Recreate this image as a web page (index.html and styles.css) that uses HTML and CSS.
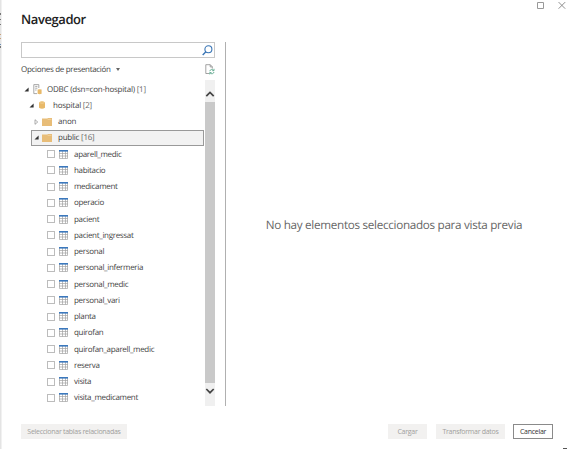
FILE: index.html
```html
<!DOCTYPE html>
<html lang="es">
<head>
<meta charset="utf-8">
<title>Navegador</title>
<link rel="stylesheet" href="styles.css">
</head>
<body>
<svg class="defs" aria-hidden="true">
  <symbol id="table" viewBox="0 0 9 9"><path fill="#fff" d="M0 0h9v9H0z"/><path d="M.5 0v8.500h8V0M3.500 1v7.500M6.500 1v7.500M0 3.500h9M0 6h9" fill="none" stroke="#a2a2a2" stroke-width=".7"/><path fill="#3b78bd" d="M0 0h9v1.600H0z"/></symbol>
  <symbol id="folder" viewBox="0 0 10 8"><path fill="#e8bd78" d="M0 .5h5.400L6 0H10v8H0z"/><path d="M5.600 1.400H9.400" stroke="#f7e3bf" stroke-width=".5"/></symbol>
  <symbol id="open" viewBox="0 0 5 5"><path fill="#333" d="M4.600.5v3.900H.5z"/></symbol>
  <symbol id="closed" viewBox="0 0 5 6"><path fill="#fff" stroke="#8a8a8a" stroke-width=".7" d="M1 .7 3.700 3 1 5.300z"/></symbol>
</svg>
<svg class="behind" width="2" height="449" viewBox="0 0 2 449"><path fill="#e4e4e4" d="M0 0h1.500v449H0z"/><path fill="#777" d="M0 13h1v2H0zM0 19h1v1H0zM0 24h1v1H0zM0 46h1v2H0z"/><path fill="#c9a27c" d="M0 34h1v1H0zM0 38h1v1H0z"/><path fill="#6d8fb5" d="M0 44h1v1H0z"/></svg>
<svg class="corner" width="4" height="1" viewBox="0 0 4 1"><path fill="#555" d="M0 0h4v1H0z"/></svg>
<div class="window">
  <div class="titlebar">
    <svg width="8" height="8" viewBox="0 0 8 8"><path d="M.5 1.500h6v6h-6z" fill="none" stroke="#999"/></svg>
    <svg width="8" height="8" viewBox="0 0 8 8"><path d="M.6 1.100l6.600 6.600M7.200 1.100.6 7.700" stroke="#888" stroke-width=".95"/></svg>
  </div>
  <h1>Navegador</h1>
  <main>
    <section class="sidebar">
      <div class="search">
        <svg width="11" height="11" viewBox="0 0 11 11"><circle cx="6.400" cy="4.300" r="3.500" fill="none" stroke="#3975b5" stroke-width="1.100"/><path d="M3.900 6.800.7 10" stroke="#3975b5" stroke-width="1.400"/></svg>
      </div>
      <div class="options">
        <span class="label">Opciones de presentación</span><i class="caret"></i>
        <svg class="refresh" width="10" height="11" viewBox="0 0 10 11"><path d="M4 9.500H.8V.7h4.500l2 2v2M5.200.8v2.100h2" fill="none" stroke="#8c8c8c" stroke-width=".8"/><path d="M4.700 7.200a2.200 2.200 0 0 1 3.900-.8M9 4.800v1.900H7.200M9 8a2.200 2.200 0 0 1-3.900.9M4.700 10.400V8.600h1.800" fill="none" stroke="#5ea88d" stroke-width=".9"/></svg>
      </div>
      <div class="browser">
        <div class="tree">
          <div class="row l0"><svg class="arrow"><use href="#open"/></svg><svg class="server" viewBox="0 0 9 11"><path d="M5.800 4V.6H.8v9H4M2.200 2.400h2.200M2.200 4.200h2.200M2.200 6h1.300" fill="none" stroke="#929292" stroke-width=".8"/><path fill="#e8b969" d="M4.600 5.600q2-.9 4 0v4.200q-2 .9-4 0z"/></svg><span>ODBC (dsn=con-hospital) <em>[1]</em></span></div>
          <div class="row l1"><svg class="arrow"><use href="#open"/></svg><svg class="database" viewBox="0 0 6 8"><path fill="#e8b969" d="M0 1.200Q3-.8 6 1.200v5.600q-3 2-6 0z"/><path d="M.2 1.600q2.800 1.300 5.600 0" fill="none" stroke="#f6deb2" stroke-width=".6"/></svg><span>hospital <em>[2]</em></span></div>
          <div class="row l2"><svg class="arrow closed"><use href="#closed"/></svg><svg class="folder"><use href="#folder"/></svg><span>anon</span></div>
          <div class="row l2 selected"><svg class="arrow"><use href="#open"/></svg><svg class="folder"><use href="#folder"/></svg><span>public <em>[16]</em></span></div>
          <div class="row leaf"><i class="check"></i><svg class="table"><use href="#table"/></svg><span>aparell_medic</span></div>
          <div class="row leaf"><i class="check"></i><svg class="table"><use href="#table"/></svg><span>habitacio</span></div>
          <div class="row leaf"><i class="check"></i><svg class="table"><use href="#table"/></svg><span>medicament</span></div>
          <div class="row leaf"><i class="check"></i><svg class="table"><use href="#table"/></svg><span>operacio</span></div>
          <div class="row leaf"><i class="check"></i><svg class="table"><use href="#table"/></svg><span>pacient</span></div>
          <div class="row leaf"><i class="check"></i><svg class="table"><use href="#table"/></svg><span>pacient_ingressat</span></div>
          <div class="row leaf"><i class="check"></i><svg class="table"><use href="#table"/></svg><span>personal</span></div>
          <div class="row leaf"><i class="check"></i><svg class="table"><use href="#table"/></svg><span>personal_infermeria</span></div>
          <div class="row leaf"><i class="check"></i><svg class="table"><use href="#table"/></svg><span>personal_medic</span></div>
          <div class="row leaf"><i class="check"></i><svg class="table"><use href="#table"/></svg><span>personal_vari</span></div>
          <div class="row leaf"><i class="check"></i><svg class="table"><use href="#table"/></svg><span>planta</span></div>
          <div class="row leaf"><i class="check"></i><svg class="table"><use href="#table"/></svg><span>quirofan</span></div>
          <div class="row leaf"><i class="check"></i><svg class="table"><use href="#table"/></svg><span>quirofan_aparell_medic</span></div>
          <div class="row leaf"><i class="check"></i><svg class="table"><use href="#table"/></svg><span>reserva</span></div>
          <div class="row leaf"><i class="check"></i><svg class="table"><use href="#table"/></svg><span>visita</span></div>
          <div class="row leaf"><i class="check"></i><svg class="table"><use href="#table"/></svg><span>visita_medicament</span></div>
        </div>
        <div class="scrollbar">
          <svg class="up" width="10" height="22" viewBox="0 0 10 22"><path d="M1.300 16.200 5 12.500l3.700 3.700" fill="none" stroke="#444" stroke-width="1.700"/></svg>
          <div class="thumb"></div>
          <svg class="down" width="10" height="23" viewBox="0 0 10 23"><path d="M1.300 6 5 9.700 8.700 6" fill="none" stroke="#444" stroke-width="1.700"/></svg>
        </div>
      </div>
    </section>
    <section class="preview"><p>No hay elementos seleccionados para vista previa</p></section>
  </main>
  <footer>
    <button class="related" disabled>Seleccionar tablas relacionadas</button>
    <button class="load" disabled>Cargar</button>
    <button class="transform" disabled>Transformar datos</button>
    <button class="cancel">Cancelar</button>
  </footer>
</div>
</body>
</html>
```
FILE: styles.css
```css
* { box-sizing: border-box; }
body { margin: 0; background: #fff; font: 8px/1 "Open Sans", "Noto Sans", sans-serif; letter-spacing: -.32px; color: #444; text-rendering: geometricPrecision; }
svg { display: block; flex: none; }
.defs { position: absolute; width: 0; height: 0; }
.behind { position: absolute; left: 0; top: 0; }
.corner { position: absolute; right: 0; bottom: 0; }
.window { width: 567px; height: 449px; display: flex; flex-direction: column; overflow: hidden; padding-left: 1px; }
.titlebar { height: 10px; padding: 1px 1px 0 0; display: flex; justify-content: flex-end; gap: 13px; }
h1 { height: 32px; margin: 0; padding-left: 20px; font-size: 13px; line-height: 18px; font-weight: 600; color: #222; letter-spacing: -.42px; }
main { height: 364px; display: flex; }
.sidebar { width: 214px; padding-left: 20px; }
.search { height: 16px; border: 1px solid #c8c8c8; display: flex; align-items: center; justify-content: flex-end; padding-right: 1px; }
.options { height: 22px; display: flex; align-items: center; }
.label { padding-top: 1px; }
.caret { margin-left: 5px; border: 2px solid transparent; border-top: 3px solid #666; border-bottom: 0; }
.refresh { margin-left: auto; }
.browser { height: 326px; display: flex; }
.tree { width: 184px; padding-top: 1px; }
.row { height: 16.25px; display: flex; align-items: center; white-space: nowrap; }
.row span { padding-top: 1px; }
.row em { font-style: normal; color: #666; }
.arrow { width: 5px; height: 5px; }
.closed { height: 6px; }
.l0, .l1, .l2 { letter-spacing: -.23px; }
.l0 { padding-left: 3px; }
.l1 { padding-left: 8px; }
.l2 { padding-left: 13px; }
.server { width: 9px; height: 11px; margin: 0 5px 0 4px; }
.database { width: 6px; height: 8px; margin: 0 8px 0 5px; }
.folder { width: 10px; height: 8px; margin: 0 6px 0 3px; }
.selected { margin-left: 10px; padding-left: 2px; margin-right: 1px; background: #f2f2f2; border: 1px solid #999; }
.leaf { padding-left: 26px; }
.check { width: 8px; height: 8px; border: 1px solid #bcbcbc; margin-right: 4px; }
.table { width: 9px; height: 9px; margin-right: 6px; }
.scrollbar { width: 10px; background: #f0f0f0; display: flex; flex-direction: column; }
.thumb { flex: 1; background: #c9c9c9; }
.preview { margin-left: 10px; flex: 1; border-left: 1px solid #b0b0b0; display: flex; justify-content: center; }
.preview p { margin: 175px 5px 0 0; font-size: 11.7px; line-height: 16px; letter-spacing: -.3px; color: #666; white-space: nowrap; }
footer { height: 43px; padding: 18px 14px 0 20px; display: flex; align-items: flex-start; }
button { height: 15px; padding: 0; border: 1px solid #f2f1f0; background: #f2f1f0; color: #a09e9c; font: 7px/13px "Open Sans", "Noto Sans", sans-serif; letter-spacing: -.28px; white-space: nowrap; }
.related { width: 106px; }
.load { width: 39px; margin-left: auto; }
.transform { width: 69px; margin: 0 8px 0 9px; }
.cancel { width: 40px; background: #fff; border-color: #8a8a8a; color: #333; }
```
